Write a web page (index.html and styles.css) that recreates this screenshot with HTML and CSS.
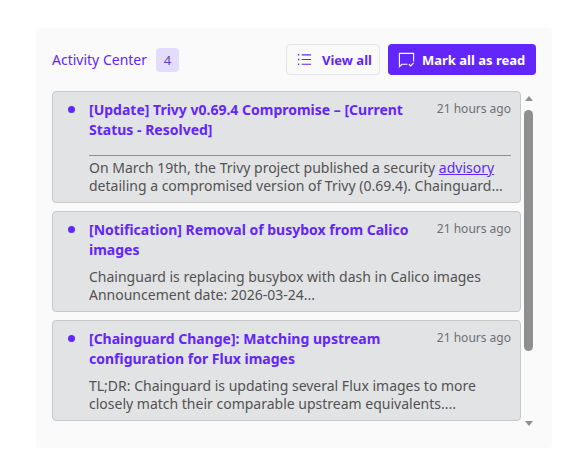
FILE: index.html
```html
<!DOCTYPE html>
<html lang="en">
<head>
<meta charset="utf-8">
<title>Activity Center</title>
<link rel="stylesheet" href="styles.css">
</head>
<body>
<section class="panel">
  <header class="head">
    <div class="title-wrap">
      <h2 class="title">Activity Center</h2>
      <span class="count">4</span>
    </div>
    <div class="actions">
      <button class="btn btn-ghost">
        <svg class="ico" viewBox="0 0 16 16" fill="none" stroke="currentColor" stroke-width="1.2"><path d="M5 3h10M5 8h10M5 13h10"/><path d="M1 3h1.4M1 8h1.4M1 13h1.4" stroke-width="1.6"/></svg>
        View all
      </button>
      <button class="btn btn-solid">
        <svg class="ico ico-lg" viewBox="0 0 18 18" fill="none" stroke="currentColor" stroke-width="1.2"><path d="M10 14H4.2L1.5 16.5V2.5h15v8.5"/><path d="M11.5 14l2 1.8 3-3.3"/></svg>
        Mark all as read
      </button>
    </div>
  </header>
  <div class="body">
    <div class="list">
      <article class="card">
        <div class="row">
          <span class="dot"></span>
          <h3 class="card-title">[Update] Trivy v0.69.4 Compromise – [Current Status - Resolved]</h3>
          <time class="time">21 hours ago</time>
        </div>
        <hr class="rule">
        <p class="text">On March 19th, the Trivy project published a security <a href="#">advisory</a> detailing a compromised version of Trivy (0.69.4). Chainguard...</p>
      </article>
      <article class="card">
        <div class="row">
          <span class="dot"></span>
          <h3 class="card-title">[Notification] Removal of busybox from Calico images</h3>
          <time class="time">21 hours ago</time>
        </div>
        <p class="text text-gap">Chainguard is replacing busybox with dash in Calico images Announcement date: 2026-03-24...</p>
      </article>
      <article class="card">
        <div class="row">
          <span class="dot"></span>
          <h3 class="card-title">[Chainguard Change]: Matching upstream configuration for Flux images</h3>
          <time class="time">21 hours ago</time>
        </div>
        <p class="text text-gap">TL;DR: Chainguard is updating several Flux images to more closely match their comparable upstream equivalents....</p>
      </article>
    </div>
    <div class="scrollbar">
      <span class="arrow arrow-up"></span>
      <span class="thumb"></span>
      <span class="arrow arrow-down"></span>
    </div>
  </div>
</section>
</body>
</html>
```
FILE: styles.css
```css
* { box-sizing: border-box; }
html, body { margin: 0; height: 100%; background: #fff; }
body {
  padding: 28px 23px 25px 36px;
  font-family: "Noto Sans", sans-serif;
  color: #525252;
  overflow: hidden;
}
.panel {
  height: 420px;
  background: #fafafa;
  border-radius: 4px;
  padding: 16px 16px 0 16px;
}
.head {
  display: flex;
  justify-content: space-between;
  align-items: center;
  height: 31px;
  margin-bottom: 16px;
}
.title-wrap { display: flex; align-items: center; gap: 9px; }
.title {
  margin: 0;
  font-size: 14px;
  font-weight: 400;
  color: #6226fb;
}
.count {
  width: 23px;
  height: 24px;
  border-radius: 4px;
  background: #e4dcfd;
  color: #5b42c8;
  font-size: 13px;
  display: flex;
  align-items: center;
  justify-content: center;
}
.actions { display: flex; gap: 8px; }
.btn {
  height: 31px;
  display: flex;
  align-items: center;
  border-radius: 4px;
  font: 700 13px "Noto Sans", sans-serif;
  padding: 0;
}
.btn-ghost {
  width: 94px;
  background: #fafafa;
  border: 1px solid #e4e4e7;
  color: #6226fb;
  padding-left: 10px;
  gap: 10px;
}
.btn-solid {
  width: 148px;
  background: #6226fb;
  border: 0;
  color: #fff;
  padding-left: 10px;
  gap: 7px;
}
.ico { width: 15px; height: 15px; flex: none; }
.ico-lg { width: 17px; height: 17px; }
.body { display: flex; height: 338px; }
.list {
  width: 469px;
  display: flex;
  flex-direction: column;
  gap: 8px;
}
.card {
  background: #e2e3e5;
  border: 1px solid #c6c8ca;
  border-radius: 4px;
  padding: 8px 9px 7px 0;
}
.row { display: flex; align-items: flex-start; }
.dot {
  width: 7px;
  height: 7px;
  border-radius: 50%;
  background: #6226fb;
  flex: none;
  margin: 6px 14px 0 15px;
}
.card-title {
  flex: 1;
  margin: 0;
  font-size: 14px;
  line-height: 20px;
  font-weight: 700;
  color: #6226fb;
}
.time {
  flex: none;
  font-size: 12px;
  line-height: 18px;
  color: #6b6f73;
  margin-left: 12px;
}
.rule {
  margin: 15px 0 3px 36px;
  border: 0;
  border-top: 1px solid #8f9092;
}
.text {
  margin: 0 0 0 36px;
  font-size: 14px;
  line-height: 18px;
  color: #525252;
}
.text-gap { margin-top: 8px; }
.text a { color: #6226fb; }
.scrollbar {
  width: 15px;
  display: flex;
  flex-direction: column;
  align-items: center;
  padding-top: 5px;
}
.arrow { width: 0; height: 0; border-left: 4px solid transparent; border-right: 4px solid transparent; flex: none; }
.arrow-up { border-bottom: 5px solid #8f8f8f; margin-bottom: 9px; }
.arrow-down { border-top: 5px solid #8f8f8f; margin-top: 70px; }
.thumb { width: 9px; height: 241px; border-radius: 5px; background: #8f8f8f; flex: none; }
```
